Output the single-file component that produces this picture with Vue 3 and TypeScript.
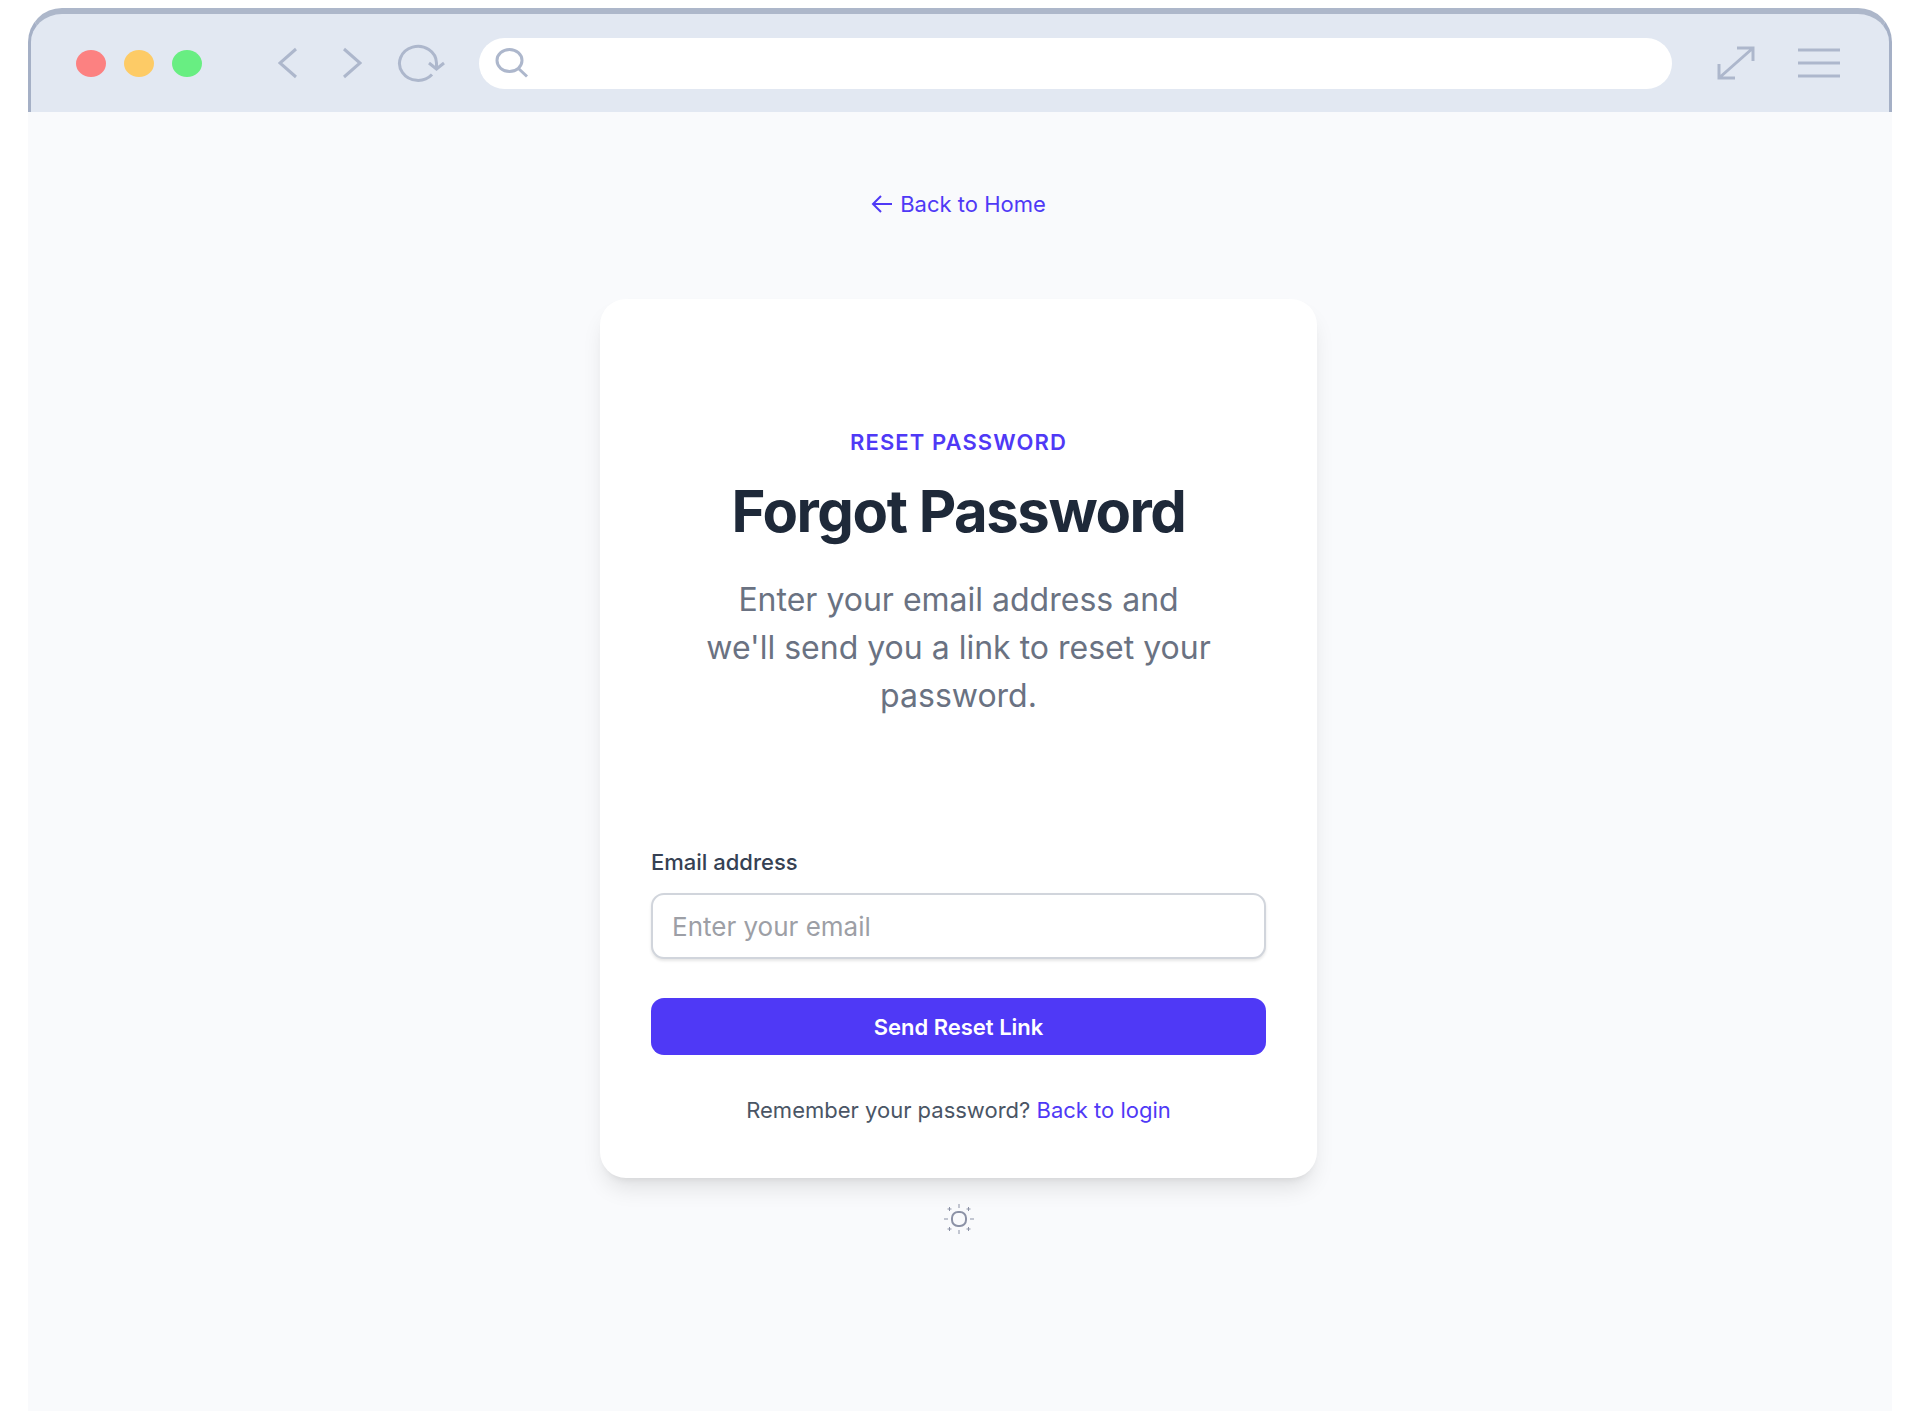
<script setup lang="ts">
import { ref } from 'vue'

const address = ref('')
const email = ref('')
</script>

<template>
  <div class="browser">
    <header class="toolbar">
      <div class="lights">
        <span class="light light-close"></span>
        <span class="light light-minimise"></span>
        <span class="light light-zoom"></span>
      </div>
      <nav class="history" aria-label="Browser navigation">
        <button type="button" class="tool" aria-label="Back">
          <svg width="20" height="32" viewBox="0 0 20 32"><path d="M18 2 2 16l16 14" /></svg>
        </button>
        <button type="button" class="tool" aria-label="Forward">
          <svg width="20" height="32" viewBox="0 0 20 32"><path d="m2 2 16 14L2 30" /></svg>
        </button>
        <button type="button" class="tool" aria-label="Reload">
          <svg width="48" height="38" viewBox="0 0 48 38">
            <path d="M35 30.500A18.500 17 0 1 1 39.500 19v6M32 19l7.500 6 7.500-6" />
          </svg>
        </button>
      </nav>
      <label class="address">
        <svg width="34" height="30" viewBox="0 0 34 30">
          <ellipse cx="14.500" cy="12.500" rx="12.500" ry="11" />
          <path d="m23.500 20.500 8.500 8" />
        </svg>
        <input v-model="address" type="text" aria-label="Address" />
      </label>
      <div class="actions">
        <button type="button" class="tool" aria-label="Expand">
          <svg width="38" height="34" viewBox="0 0 38 34">
            <path d="M2 32 36 2M20 2h16v13M2 18v14h16" />
          </svg>
        </button>
        <button type="button" class="tool" aria-label="Menu">
          <svg width="44" height="30" viewBox="0 0 44 30">
            <path d="M1 2h42M1 15h42M1 28h42" />
          </svg>
        </button>
      </div>
    </header>

    <main class="page">
      <a href="#" class="home link">
        <svg width="22" height="18" viewBox="0 0 22 18"><path d="M10 1 2 9l8 8M2 9h19" /></svg>
        <span>Back to Home</span>
      </a>

      <section class="card">
        <div class="intro">
          <p class="eyebrow">Reset Password</p>
          <h1 class="title">Forgot Password</h1>
          <p class="lead">Enter your email address and we'll send you a link to reset your password.</p>
        </div>
        <form class="form" @submit.prevent>
          <label class="label" for="email">Email address</label>
          <input id="email" v-model="email" class="field" type="email" placeholder="Enter your email" />
          <button type="submit" class="submit">Send Reset Link</button>
        </form>
        <p class="remember">Remember your password? <a href="#" class="link">Back to login</a></p>
      </section>

      <button type="button" class="theme" aria-label="Toggle theme">
        <svg width="32" height="32" viewBox="0 0 32 32">
          <rect x="9" y="9" width="14" height="14" rx="6" />
          <path class="ray" d="M16 1v4M16 27v4M1 16h4M27 16h4" />
          <path class="spark" d="M4.500 6h4M23.500 6h4M4.500 26h4M23.500 26h4M6.500 4v4M25.500 4v4M6.500 24v4M25.500 24v4" />
        </svg>
      </button>
    </main>
  </div>
</template>

<style>
body {
  background: #fff;
}
</style>

<style scoped>
.browser {
  display: flex;
  flex-direction: column;
  min-height: calc(100vh - 9px);
  margin: 0 28px 9px;
  padding-top: 8px;
  box-sizing: border-box;
  font-family: Inter, "Liberation Sans", sans-serif;
}

button,
input {
  font-family: inherit;
}

svg {
  display: block;
  fill: none;
  stroke: currentColor;
}

p,
h1 {
  margin: 0;
}

.toolbar {
  display: flex;
  align-items: center;
  height: 104px;
  box-sizing: border-box;
  padding: 0 48px 0 45px;
  border: 3px solid #a5b0c6;
  border-top: 6px solid #adb7ca;
  border-bottom: 0;
  border-radius: 34px 34px 0 0;
  background: #e2e8f2;
  color: #adb7cc;
}

.lights {
  display: flex;
  gap: 18px;
}

.light {
  width: 30px;
  height: 27px;
  border-radius: 50%;
}

.light-close {
  background: #fc8181;
}

.light-minimise {
  background: #fdcb66;
}

.light-zoom {
  background: #68ee82;
}

.history {
  display: flex;
  align-items: center;
  gap: 44px;
  margin-left: 76px;
}

.tool {
  padding: 0;
  border: 0;
  background: none;
  color: inherit;
}

.tool svg,
.address svg {
  stroke-width: 3;
}

.history .tool:last-child {
  margin-left: -9px;
}

.address {
  display: flex;
  flex: 1;
  align-items: center;
  gap: 12px;
  height: 51px;
  box-sizing: border-box;
  margin: 0 45px 0 34px;
  padding: 0 16px;
  border-radius: 26px;
  background: #fff;
}

.address input {
  flex: 1;
  border: 0;
  outline: 0;
  background: none;
  font-size: 22px;
}

.actions {
  display: flex;
  align-items: center;
  gap: 42px;
}

.page {
  display: flex;
  flex: 1;
  flex-direction: column;
  align-items: center;
  padding: 76px 27px 48px 24px;
  background: #f9fafc;
}

.link {
  color: #4f39f6;
  text-decoration: none;
}

.home {
  display: flex;
  align-items: center;
  gap: 7px;
  font-size: 22px;
  line-height: 32px;
}

.home svg {
  stroke-width: 2;
}

.card {
  width: 100%;
  max-width: 717px;
  box-sizing: border-box;
  margin-top: 79px;
  padding: 127px 51px 52px;
  border-radius: 26px;
  background: #fff;
  box-shadow: 0 14px 22px -4px rgb(0 0 0 / 10%), 0 6px 9px -6px rgb(0 0 0 / 10%);
}

.intro {
  padding: 0 51px;
  text-align: center;
}

.eyebrow {
  color: #4f39f6;
  font-size: 22px;
  font-weight: 600;
  line-height: 32px;
  letter-spacing: 0.05em;
  text-transform: uppercase;
}

.title {
  margin-top: 17px;
  color: #1e2939;
  font-size: 58px;
  font-weight: 700;
  line-height: 72px;
  letter-spacing: -0.025em;
}

.lead {
  margin-top: 29px;
  color: #6a7282;
  font-size: 32px;
  line-height: 48px;
}

.form {
  display: flex;
  flex-direction: column;
  margin-top: 126px;
}

.label {
  color: #364153;
  font-size: 22px;
  font-weight: 500;
  line-height: 32px;
}

.field {
  height: 66px;
  box-sizing: border-box;
  margin-top: 15px;
  padding: 0 19px;
  border: 2px solid #d1d5dc;
  border-radius: 13px;
  outline: 0;
  background: #fff;
  box-shadow: 0 2px 3px rgb(0 0 0 / 10%);
  color: #1e2939;
  font-size: 26px;
}

.field::placeholder {
  color: #9d9fa6;
  opacity: 1;
}

.submit {
  height: 57px;
  margin-top: 39px;
  border: 0;
  border-radius: 13px;
  background: #4f39f6;
  color: #fff;
  font-size: 22px;
  font-weight: 600;
}

.remember {
  margin-top: 39px;
  color: #4a5565;
  font-size: 22px;
  line-height: 32px;
  text-align: center;
}

.theme {
  margin-top: 25px;
  padding: 0;
  border: 0;
  background: none;
  color: #8c92a6;
}

.theme svg {
  stroke-width: 2;
}

.ray {
  opacity: 0.5;
}

.spark {
  stroke-width: 1;
}
</style>
